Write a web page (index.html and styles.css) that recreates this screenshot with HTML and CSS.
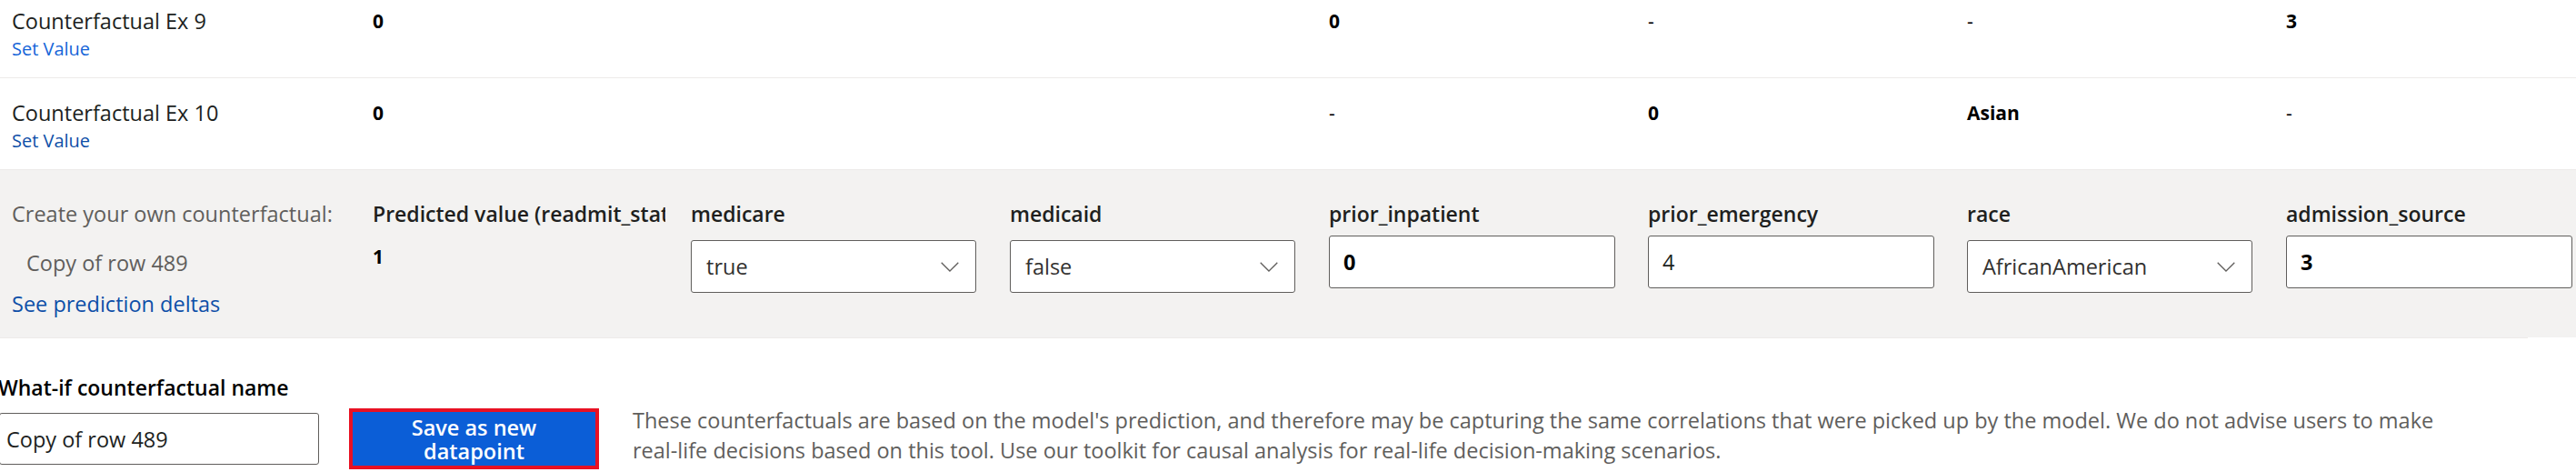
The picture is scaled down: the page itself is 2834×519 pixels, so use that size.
FILE: index.html
```html
<!DOCTYPE html>
<html lang="en">
<head>
<meta charset="utf-8">
<title>What-if counterfactuals</title>
<link rel="stylesheet" href="styles.css">
</head>
<body>
<div class="page">
  <div class="list">
    <div class="row cols">
      <div class="name-cell">
        <div class="name">Counterfactual Ex 9</div>
        <a class="link link-bright" href="#">Set Value</a>
      </div>
      <div class="val">0</div>
      <div class="val"></div>
      <div class="val"></div>
      <div class="val">0</div>
      <div class="val dash">-</div>
      <div class="val dash">-</div>
      <div class="val">3</div>
    </div>
    <div class="row cols">
      <div class="name-cell">
        <div class="name">Counterfactual Ex 10</div>
        <a class="link" href="#">Set Value</a>
      </div>
      <div class="val">0</div>
      <div class="val"></div>
      <div class="val"></div>
      <div class="val dash">-</div>
      <div class="val">0</div>
      <div class="val">Asian</div>
      <div class="val dash">-</div>
    </div>
  </div>

  <div class="panel cols">
    <div class="own">
      <div class="own-title">Create your own counterfactual:</div>
      <div class="own-copy">Copy of row 489</div>
      <a class="own-deltas" href="#">See prediction deltas</a>
    </div>
    <div class="field">
      <div class="flabel clip">Predicted value (readmit_status)</div>
      <div class="predicted">1</div>
    </div>
    <div class="field">
      <div class="flabel">medicare</div>
      <div class="dropdown"><span>true</span><svg class="chev" width="20" height="11" viewBox="0 0 20 11"><polyline points="0.7,0.7 10,10 19.3,0.7" fill="none" stroke="#605e5c" stroke-width="1.3"/></svg></div>
    </div>
    <div class="field">
      <div class="flabel">medicaid</div>
      <div class="dropdown"><span>false</span><svg class="chev" width="20" height="11" viewBox="0 0 20 11"><polyline points="0.7,0.7 10,10 19.3,0.7" fill="none" stroke="#605e5c" stroke-width="1.3"/></svg></div>
    </div>
    <div class="field">
      <div class="flabel">prior_inpatient</div>
      <input class="textbox strong" type="text" value="0">
    </div>
    <div class="field">
      <div class="flabel">prior_emergency</div>
      <input class="textbox" type="text" value="4">
    </div>
    <div class="field">
      <div class="flabel">race</div>
      <div class="dropdown"><span>AfricanAmerican</span><svg class="chev" width="20" height="11" viewBox="0 0 20 11"><polyline points="0.7,0.7 10,10 19.3,0.7" fill="none" stroke="#605e5c" stroke-width="1.3"/></svg></div>
    </div>
    <div class="field">
      <div class="flabel">admission_source</div>
      <input class="textbox strong" type="text" value="3">
    </div>
  </div>

  <div class="bottom">
    <div class="name-label">What-if counterfactual name</div>
    <div class="save-row">
      <input class="name-input" type="text" value="Copy of row 489">
      <button class="save-btn" type="button">Save as new<br>datapoint</button>
      <p class="disclaimer">These counterfactuals are based on the model's prediction, and therefore may be capturing the same correlations that were picked up by the model. We do not advise users to make real-life decisions based on this tool. Use our toolkit for causal analysis for real-life decision-making scenarios.</p>
    </div>
  </div>
</div>
</body>
</html>
```

FILE: styles.css
```css
* { box-sizing: border-box; }

html, body {
  margin: 0;
  padding: 0;
  background: #ffffff;
}

body {
  font-family: "Open Sans", "Noto Sans", "Liberation Sans", sans-serif;
  color: #323130;
  width: 2834px;
  height: 519px;
  overflow: hidden;
}

.page {
  width: 2834px;
}

.cols {
  display: grid;
  grid-template-columns: 410px 350px 351px 351px 351px 351px 351px 1fr;
}

/* list of counterfactual rows (scrolled) */
.list {
  margin-top: -15px;
}

.row {
  padding: 21px 0 18px;
  border-bottom: 1px solid #edebe9;
}

.name-cell {
  padding-left: 13px;
}

.name {
  font-size: 23.5px;
  line-height: 34px;
  color: #201f1e;
  white-space: nowrap;
}

.link {
  display: block;
  margin-top: 1px;
  font-size: 20px;
  line-height: 26px;
  color: #0e4fa8;
  text-decoration: none;
}

.link-bright {
  color: #1565d8;
}

.val {
  font-size: 21px;
  font-weight: 700;
  line-height: 34px;
  color: #000000;
}

.val.dash {
  font-weight: 400;
}

/* create-your-own panel */
.panel {
  background: #f3f2f1;
  padding: 32px 0 21px;
}

.own {
  padding-left: 13px;
  font-size: 23.5px;
  line-height: 32px;
  white-space: nowrap;
}

.own-title {
  color: #605e5c;
}

.own-copy {
  margin: 22px 0 0 16px;
  color: #605e5c;
}

.own-deltas {
  display: block;
  margin-top: 13px;
  color: #0e4fa8;
  text-decoration: none;
}

.field {
  display: flex;
  flex-direction: column;
  align-items: flex-start;
}

.flabel {
  font-size: 23px;
  font-weight: 600;
  line-height: 32px;
  color: #201f1e;
  white-space: nowrap;
}

.flabel.clip {
  width: 322px;
  overflow: hidden;
}

.predicted {
  margin-top: 16px;
  font-size: 21px;
  font-weight: 700;
  line-height: 30px;
  color: #000000;
}

.dropdown {
  margin-top: 13px;
  width: 314px;
  height: 58px;
  display: flex;
  align-items: center;
  justify-content: space-between;
  padding: 0 18px 0 16px;
  background: #ffffff;
  border: 1px solid #605e5c;
  border-radius: 3px;
  font-size: 23.5px;
  line-height: 32px;
  color: #323130;
}

.chev {
  display: block;
  flex: none;
}

.textbox {
  margin-top: 8px;
  width: 315px;
  height: 58px;
  padding: 0 15px;
  background: #ffffff;
  border: 1px solid #605e5c;
  border-radius: 3px;
  font-family: inherit;
  font-size: 23.5px;
  color: #201f1e;
  outline: none;
}

.textbox.strong {
  font-weight: 700;
  color: #000000;
}

/* bottom: name + save */
.bottom {
  margin-right: 53px;
  padding-top: 38px;
  border-top: 1px solid #edebe9;
}

.name-label {
  margin-left: -2px;
  font-size: 23px;
  font-weight: 600;
  line-height: 32px;
  color: #000000;
}

.save-row {
  display: flex;
  align-items: center;
  margin-top: 4px;
}

.name-input {
  flex: none;
  margin-left: -1px;
  width: 352px;
  height: 57px;
  padding: 0 7px;
  background: #ffffff;
  border: 1px solid #605e5c;
  border-radius: 3px;
  font-family: inherit;
  font-size: 23.5px;
  color: #201f1e;
  outline: none;
}

.save-btn {
  flex: none;
  margin-left: 33px;
  width: 275px;
  height: 67px;
  padding: 0;
  background: #0b5ed7;
  border: 4px solid #e81123;
  color: #ffffff;
  font-family: inherit;
  font-size: 23.5px;
  font-weight: 600;
  line-height: 26px;
  text-align: center;
}

.disclaimer {
  margin: 0 0 7px 37px;
  max-width: 2025px;
  font-size: 23.5px;
  line-height: 33px;
  color: #605e5c;
}
```
